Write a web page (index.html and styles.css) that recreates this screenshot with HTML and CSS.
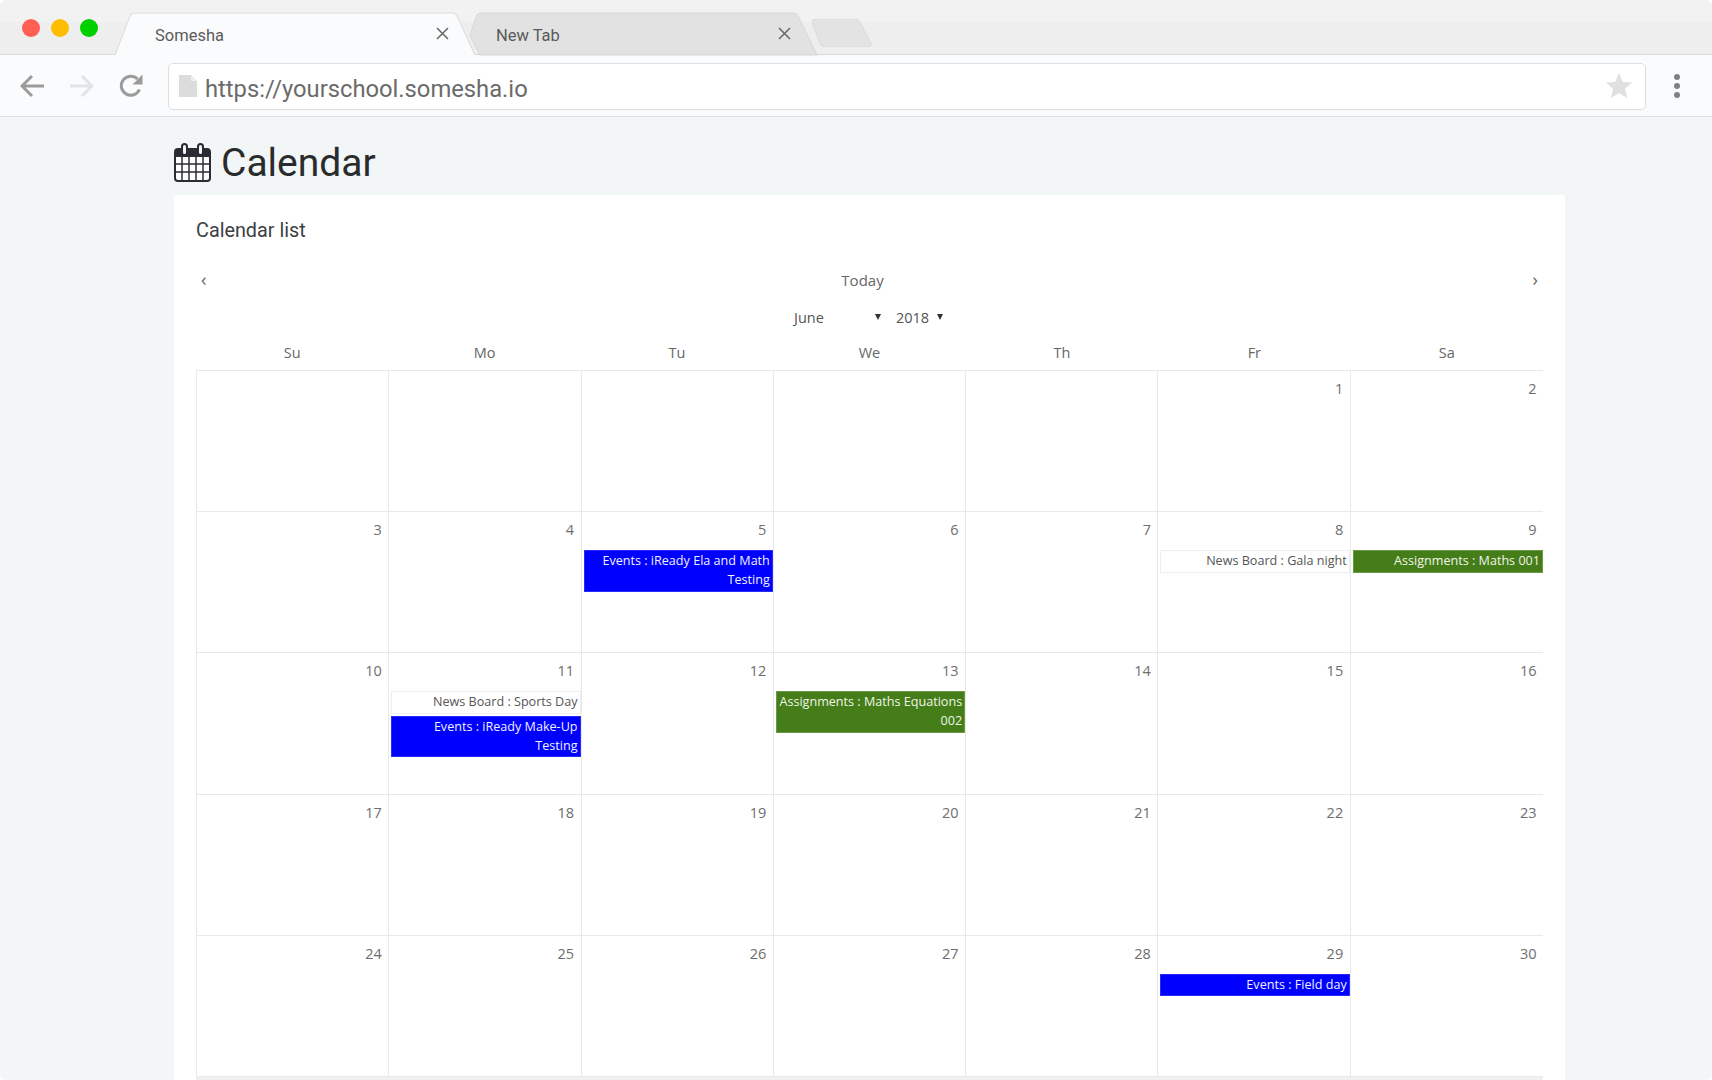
FILE: index.html
```html
<!DOCTYPE html>
<html lang="en">
<head>
<meta charset="utf-8">
<title>Somesha</title>
<link rel="stylesheet" href="styles.css">
</head>
<body>
<div class="window">
  <header class="tabbar">
    <div class="lights"><span class="light red"></span><span class="light amber"></span><span class="light green"></span></div>
    <div class="tab tab-active">
      <svg class="tab-shape" viewBox="0 0 360 41" preserveAspectRatio="none"><path d="M0 41 L15 3 Q16 0 20 0 L337 0 Q341 0 342 3 L360 41" fill="#fafbfd" stroke="#dcdcdc"/></svg>
      <span class="tab-label">Somesha</span>
      <svg class="tab-close" viewBox="0 0 13 13"><path d="M1 1 L12 12 M12 1 L1 12" stroke="#666" stroke-width="1.5" fill="none"/></svg>
    </div>
    <div class="tab tab-other">
      <svg class="tab-shape" viewBox="0 0 347 41" preserveAspectRatio="none"><path d="M0 22 L6 4 Q7 0 12 0 L322 0 Q327 0 328 3 L347 41 L10 41 Z" fill="#e2e2e2" stroke="#d8d8d8"/></svg>
      <span class="tab-label">New Tab</span>
      <svg class="tab-close" viewBox="0 0 13 13"><path d="M1 1 L12 12 M12 1 L1 12" stroke="#666" stroke-width="1.5" fill="none"/></svg>
    </div>
    <svg class="new-tab" viewBox="0 0 61 28"><path d="M1 3 Q1 0 5 0 L44 0 Q48 0 49 3 L60 24 Q61 28 57 28 L14 28 Q10 28 9 25 Z" fill="#e3e3e3" stroke="#dcdcdc"/></svg>
  </header>

  <div class="toolbar">
    <svg class="nav-icon" viewBox="0 0 24 24"><path d="M24 12 H3 M12 2 L2 12 L12 22" fill="none" stroke="#9b9b9b" stroke-width="3"/></svg>
    <svg class="nav-icon nav-forward" viewBox="0 0 24 24"><path d="M0 12 H21 M12 2 L22 12 L12 22" fill="none" stroke="#e2e3e4" stroke-width="3"/></svg>
    <svg class="nav-icon nav-reload" viewBox="0 0 24 24"><path d="M20.5 15.5 A9.5 9.5 0 1 1 18.5 5" fill="none" stroke="#9b9b9b" stroke-width="3"/><path d="M23.5 0.5 V10.5 H13.5 Z" fill="#9b9b9b"/></svg>
    <div class="address">
      <svg class="doc-icon" viewBox="0 0 18 22"><path d="M0 0 H12 L18 6 V22 H0 Z" fill="#dcdcdc"/><path d="M12 0 L18 6 H12 Z" fill="#efefef"/></svg>
      <span class="url">https://yourschool.somesha.io</span>
      <svg class="star" viewBox="0 0 26 25"><path d="M13 0 L16.8 8.9 L26 9.6 L19 15.7 L21.1 25 L13 20 L4.9 25 L7 15.7 L0 9.6 L9.2 8.9 Z" fill="#e0e0e0"/></svg>
    </div>
    <div class="kebab"><span></span><span></span><span></span></div>
  </div>

  <main class="content">
    <h1 class="page-title">
      <svg class="cal-icon" viewBox="0 0 37 39">
        <rect x="1" y="6" width="35" height="32" rx="3" fill="#fff" stroke="#2b2c33" stroke-width="2"/>
        <rect x="1" y="6" width="35" height="8" fill="#2b2c33"/>
        <g stroke="#2b2c33" stroke-width="1.5"><path d="M8 14 V37 M15 14 V37 M22 14 V37 M29 14 V37 M2 21 H35 M2 29 H35"/></g>
        <rect x="8" y="1" width="5" height="11" rx="2.5" fill="#f3f6f7" stroke="#2b2c33" stroke-width="2"/>
        <rect x="24" y="1" width="5" height="11" rx="2.5" fill="#f3f6f7" stroke="#2b2c33" stroke-width="2"/>
      </svg>
      <span>Calendar</span>
    </h1>
    <section class="card">
      <h2 class="card-title">Calendar list</h2>
      <div class="cal-nav"><span class="chev">‹</span><span class="today">Today</span><span class="chev">›</span></div>
      <div class="cal-selects">
        <span class="select select-month">June<i class="caret"></i></span>
        <span class="select select-year">2018<i class="caret"></i></span>
      </div>
      <div class="weekdays"><span>Su</span><span>Mo</span><span>Tu</span><span>We</span><span>Th</span><span>Fr</span><span>Sa</span></div>
      <div class="month">
        <div class="day"></div><div class="day"></div><div class="day"></div><div class="day"></div><div class="day"></div>
        <div class="day"><span class="num">1</span></div>
        <div class="day"><span class="num">2</span></div>

        <div class="day"><span class="num">3</span></div>
        <div class="day"><span class="num">4</span></div>
        <div class="day"><span class="num">5</span><div class="ev ev-blue">Events : iReady Ela and Math Testing</div></div>
        <div class="day"><span class="num">6</span></div>
        <div class="day"><span class="num">7</span></div>
        <div class="day"><span class="num">8</span><div class="ev ev-white">News Board : Gala night</div></div>
        <div class="day"><span class="num">9</span><div class="ev ev-green">Assignments : Maths 001</div></div>

        <div class="day"><span class="num">10</span></div>
        <div class="day"><span class="num">11</span><div class="ev ev-white">News Board : Sports Day</div><div class="ev ev-blue">Events : iReady Make-Up Testing</div></div>
        <div class="day"><span class="num">12</span></div>
        <div class="day"><span class="num">13</span><div class="ev ev-green">Assignments : Maths Equations 002</div></div>
        <div class="day"><span class="num">14</span></div>
        <div class="day"><span class="num">15</span></div>
        <div class="day"><span class="num">16</span></div>

        <div class="day"><span class="num">17</span></div>
        <div class="day"><span class="num">18</span></div>
        <div class="day"><span class="num">19</span></div>
        <div class="day"><span class="num">20</span></div>
        <div class="day"><span class="num">21</span></div>
        <div class="day"><span class="num">22</span></div>
        <div class="day"><span class="num">23</span></div>

        <div class="day"><span class="num">24</span></div>
        <div class="day"><span class="num">25</span></div>
        <div class="day"><span class="num">26</span></div>
        <div class="day"><span class="num">27</span></div>
        <div class="day"><span class="num">28</span></div>
        <div class="day"><span class="num">29</span><div class="ev ev-blue">Events : Field day</div></div>
        <div class="day"><span class="num">30</span></div>
      </div>
      <div class="hscroll"><div class="hscroll-thumb"></div></div>
    </section>
  </main>
</div>
</body>
</html>
```

FILE: styles.css
```css
* { box-sizing: border-box; }
html, body { margin: 0; height: 1080px; overflow: hidden; background: #fff; }
body { font-family: "Open Sans", "Liberation Sans", sans-serif; color: #666; }
.window { height: 1080px; display: flex; flex-direction: column; overflow: hidden; border-radius: 6px; background: #f3f6f7; }

/* tab strip */
.tabbar { flex: none; height: 55px; display: flex; align-items: flex-start; border-bottom: 1px solid #d9d9d9; background: linear-gradient(#f2f2f2 0 22px, #eeeeee 22px); }
.lights { flex: none; width: 115px; height: 54px; padding: 19px 0 0 22px; display: flex; gap: 11px; }
.light { width: 18px; height: 18px; border-radius: 50%; }
.red { background: #ff5f52; }
.amber { background: #ffbd00; }
.green { background: #00cf00; }
.tab { position: relative; height: 42px; margin-top: 13px; display: flex; align-items: center; font-family: Roboto, sans-serif; font-size: 16.5px; color: #5a5a5a; }
.tab-shape { position: absolute; left: 0; top: 0; width: 100%; height: 100%; overflow: visible; }
.tab-label, .tab-close { position: relative; }
.tab-label { flex: 1; padding-top: 3px; }
.tab-close { flex: none; width: 13px; height: 13px; margin-top: -2px; }
.tab-active { width: 360px; padding: 0 26px 0 40px; z-index: 2; }
.tab-other { width: 347px; margin-left: -5px; padding: 0 26px 0 26px; z-index: 1; }
.new-tab { flex: none; width: 61px; height: 28px; margin: 19px 0 0 -6px; }

/* toolbar */
.toolbar { flex: none; height: 62px; display: flex; align-items: center; padding: 0 32px 0 20px; background: #fafbfd; border-bottom: 1px solid #dfe2e4; }
.nav-icon { flex: none; width: 24px; height: 24px; margin-right: 26px; }
.nav-forward { margin-right: 25px; }
.nav-reload { margin-right: 25px; }
.address { flex: 1; height: 47px; margin-top: 1px; display: flex; align-items: center; padding: 0 13px 0 10px; background: #fff; border: 1.5px solid #dcdfe2; border-radius: 5px; }
.doc-icon { flex: none; width: 18px; height: 22px; margin: 0 8px 0 0; }
.url { flex: 1; padding-top: 6px; font-family: Roboto, sans-serif; font-size: 23.75px; color: #6b6b6b; }
.star { flex: none; width: 26px; height: 25px; margin-top: -2px; }
.kebab { flex: none; display: flex; flex-direction: column; gap: 3px; margin-left: 28px; }
.kebab span { width: 6px; height: 6px; border-radius: 50%; background: #808080; }

/* page */
.content { flex: 1; min-height: 0; padding: 0 147px 0 174px; }
.page-title { margin: 0; height: 78px; display: flex; align-items: center; gap: 10px; padding-top: 13px; font-family: Roboto, sans-serif; font-weight: 400; font-size: 39px; color: #292b2c; }
.cal-icon { flex: none; width: 37px; height: 39px; }
.card { background: #fff; border-radius: 3px; padding: 0 22px; height: 900px; }
.card-title { margin: 0; height: 70px; display: flex; align-items: center; font-family: Roboto, sans-serif; font-weight: 400; font-size: 19.8px; color: #3b3f45; }
.cal-nav { height: 29px; margin-bottom: 1px; display: flex; align-items: center; justify-content: space-between; padding: 0 5px; font-size: 15px; color: #666; }
.today { margin-left: -14px; }
.chev { font-size: 18px; line-height: 1; margin-top: -2px; color: #666; }
.cal-selects { height: 44px; display: flex; align-items: center; justify-content: center; gap: 15px; padding-right: 2px; font-size: 14.5px; color: #555; }
.select { display: flex; align-items: center; justify-content: space-between; }
.select-month { width: 87px; }
.select-year { width: 47px; }
.caret { width: 0; height: 0; border-left: 3.5px solid transparent; border-right: 3.5px solid transparent; border-top: 6px solid #333; }
.weekdays { height: 31px; display: grid; grid-template-columns: repeat(7, 1fr); font-size: 14.5px; color: #666; text-align: center; line-height: 28px; }
.month { display: grid; grid-template-columns: repeat(7, 1fr); grid-auto-rows: 141.2px; border-top: 1px solid #e9e9e9; border-left: 1px solid #e9e9e9; }
.day { min-width: 0; border-right: 1px solid #e9e9e9; border-bottom: 1px solid #e9e9e9; padding-left: 2px; display: flex; flex-direction: column; align-items: stretch; }
.day:nth-child(7n) { border-right: 0; }
.num { height: 38px; padding: 8px 6.5px 0 0; text-align: right; font-size: 14.5px; line-height: 20px; color: #6e6e6e; }
.ev { margin-bottom: 2px; padding: 0 2px 1.5px 0; text-align: right; font-size: 12.6px; line-height: 19px; border: 1px solid; }
.ev-blue { background: #0000ff; border-color: #2a2aff; color: #f0f0ff; }
.ev-green { background: #457d18; border-color: #6a9a45; color: #f0f5e8; }
.ev-white { background: #fff; border-color: #eeeeee; color: #555; }
.hscroll { height: 17px; padding: 3px 19px 0 19px; background: #f0f0f0; }
.hscroll-thumb { height: 10px; background: #cfcfcf; }
```
